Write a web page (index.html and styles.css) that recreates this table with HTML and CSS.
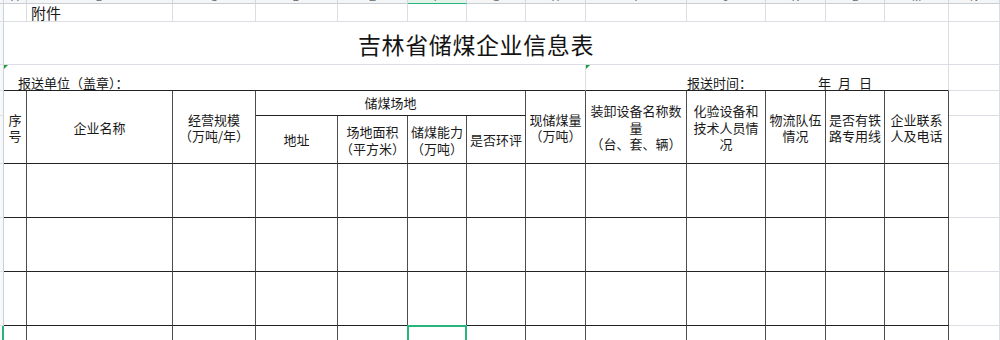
FILE: index.html
```html
<!DOCTYPE html>
<html lang="zh-CN">
<head>
<meta charset="utf-8">
<title>吉林省储煤企业信息表</title>
<link rel="stylesheet" href="styles.css">
</head>
<body>
<div class="sheet">
  <!-- column header strip -->
  <div class="ch"></div>
  <div class="ch"><span>A</span></div>
  <div class="ch"><span>B</span></div>
  <div class="ch"><span>C</span></div>
  <div class="ch"><span>D</span></div>
  <div class="ch"><span>E</span></div>
  <div class="ch sel"><span>F</span></div>
  <div class="ch"><span>G</span></div>
  <div class="ch"><span>H</span></div>
  <div class="ch"><span>I</span></div>
  <div class="ch"><span>J</span></div>
  <div class="ch"><span>K</span></div>
  <div class="ch"><span>L</span></div>
  <div class="ch"><span>M</span></div>
  <div class="ch"><span>N</span></div>

  <!-- row 1 -->
  <div class="rh"></div>
  <div class="g"></div>
  <div class="g att">附件</div>
  <div class="g"></div><div class="g"></div><div class="g"></div><div class="g"></div>
  <div class="g"></div><div class="g"></div><div class="g"></div><div class="g"></div>
  <div class="g"></div><div class="g"></div><div class="g"></div>
  <div class="g"></div>

  <!-- row 2 -->
  <div class="rh"></div>
  <div class="g title">吉林省储煤企业信息表</div>
  <div class="g"></div>

  <!-- row 3 -->
  <div class="rh"></div>
  <div class="g unit"><i class="tri"></i>报送单位（盖章）：</div>
  <div class="g date"><i class="tri"></i><span>报送时间：</span><span class="yy">年</span><span class="mm">月</span><span class="dd">日</span></div>
  <div class="g"></div>

  <!-- row 4 -->
  <div class="rh"></div>
  <div class="t h rs2">序<br>号</div>
  <div class="t h rs2">企业名称</div>
  <div class="t h rs2">经营规模<br>（万吨/年）</div>
  <div class="t h cs4 top">储煤场地</div>
  <div class="t h rs2">现储煤量<br>（万吨）</div>
  <div class="t h rs2">装卸设备名称数<br>量<br>（台、套、辆）</div>
  <div class="t h rs2">化验设备和<br>技术人员情<br>况</div>
  <div class="t h rs2">物流队伍<br>情况</div>
  <div class="t h rs2">是否有铁<br>路专用线</div>
  <div class="t h rs2">企业联系<br>人及电话</div>
  <div class="g"></div>

  <!-- row 5 -->
  <div class="rh"></div>
  <div class="t h">地址</div>
  <div class="t h">场地面积<br>（平方米）</div>
  <div class="t h">储煤能力<br>（万吨）</div>
  <div class="t h">是否环评</div>
  <div class="g"></div>

  <!-- row 6 -->
  <div class="rh"></div>
  <div class="t"></div><div class="t"></div><div class="t"></div><div class="t"></div><div class="t"></div>
  <div class="t"></div><div class="t"></div><div class="t"></div><div class="t"></div><div class="t"></div>
  <div class="t"></div><div class="t"></div><div class="t"></div>
  <div class="g"></div>

  <!-- row 7 -->
  <div class="rh"></div>
  <div class="t"></div><div class="t"></div><div class="t"></div><div class="t"></div><div class="t"></div>
  <div class="t"></div><div class="t"></div><div class="t"></div><div class="t"></div><div class="t"></div>
  <div class="t"></div><div class="t"></div><div class="t"></div>
  <div class="g"></div>

  <!-- row 8 -->
  <div class="rh"></div>
  <div class="t"></div><div class="t"></div><div class="t"></div><div class="t"></div><div class="t"></div>
  <div class="t"></div><div class="t"></div><div class="t"></div><div class="t"></div><div class="t"></div>
  <div class="t"></div><div class="t"></div><div class="t"></div>
  <div class="g"></div>

  <!-- row 9 -->
  <div class="rh on"></div>
  <div class="t"></div><div class="t"></div><div class="t"></div><div class="t"></div><div class="t"></div>
  <div class="t selc"></div><div class="t"></div><div class="t"></div><div class="t"></div><div class="t"></div>
  <div class="t"></div><div class="t"></div><div class="t"></div>
  <div class="g"></div>
</div>
</body>
</html>
```

FILE: styles.css
```css
* {
  box-sizing: border-box;
}

html, body {
  margin: 0;
  padding: 0;
  background: #ffffff;
}

body {
  width: 1000px;
  height: 340px;
  overflow: hidden;
  font-family: "Noto Sans CJK SC", "Noto Sans", sans-serif;
  color: #1a1a1a;
}

.sheet {
  display: grid;
  width: 1000px;
  height: 340px;
  overflow: hidden;
  grid-template-columns: 4px 23px 146px 83px 82px 70px 59px 59px 60px 101px 79px 60px 59px 64px 1fr;
  grid-template-rows: 4px 18px 43px 26px 25px 48px 54px 54px 54px 54px;
}

/* column header strip */
.ch {
  background: #f4f5f7;
  border-right: 1px solid #d3d7de;
  border-bottom: 1px solid #c9cdd4;
  overflow: hidden;
  display: flex;
  align-items: flex-end;
  justify-content: center;
}

.ch span {
  flex: none;
  font: 11px/11px "Liberation Sans", sans-serif;
  color: #6a6a6a;
}

.ch.sel {
  background: #e2f3e9;
  border-bottom: 1px solid #27b57b;
}

/* row header column */
.rh {
  background: #f7f8fa;
  border-right: 1px solid #cdd2da;
  border-bottom: 1px solid #dde0e5;
}

.rh.on {
  border-right: 2px solid #27b57b;
}

/* plain gridline cell */
.g {
  border-right: 1px solid #dadde3;
  border-bottom: 1px solid #dadde3;
  position: relative;
}

/* bordered table cell */
.t {
  border-right: 1px solid #4d4d4d;
  border-bottom: 1px solid #222222;
}

.h {
  display: flex;
  align-items: center;
  justify-content: center;
  text-align: center;
  font-size: 13px;
  line-height: 16.5px;
  padding-top: 2px;
  white-space: nowrap;
}

.h.top {
  padding-top: 0;
}

.rs2 {
  grid-row: span 2;
}

.cs4 {
  grid-column: span 4;
}

.att {
  display: flex;
  align-items: center;
  padding-left: 4px;
  font-size: 15px;
  line-height: 17px;
  white-space: nowrap;
}

.title {
  grid-column: span 13;
  display: flex;
  align-items: center;
  justify-content: center;
  font-size: 23px;
  letter-spacing: 0.6px;
  color: #141414;
  padding-top: 1px;
}

.unit {
  grid-column: span 8;
  display: flex;
  align-items: flex-end;
  padding: 0 0 0 14px;
  font-size: 13px;
  line-height: 15px;
  border-bottom: 1px solid #222222;
  white-space: nowrap;
}

.date {
  grid-column: span 5;
  display: flex;
  align-items: flex-end;
  padding: 0 0 0 101px;
  font-size: 13px;
  line-height: 15px;
  border-bottom: 1px solid #222222;
  white-space: nowrap;
}

.date .yy {
  margin-left: 66px;
}

.date .mm {
  margin-left: 7px;
}

.date .dd {
  margin-left: 8px;
}

/* small green cell markers */
.tri {
  position: absolute;
  left: 0;
  top: 0;
  width: 0;
  height: 0;
  border-top: 4px solid #1f9d3d;
  border-right: 4px solid transparent;
}

/* active cell selection */
.selc {
  position: relative;
}

.selc::after {
  content: "";
  position: absolute;
  left: -1px;
  top: -1px;
  right: -1px;
  bottom: -2px;
  border: 2px solid #27b57b;
}
```
